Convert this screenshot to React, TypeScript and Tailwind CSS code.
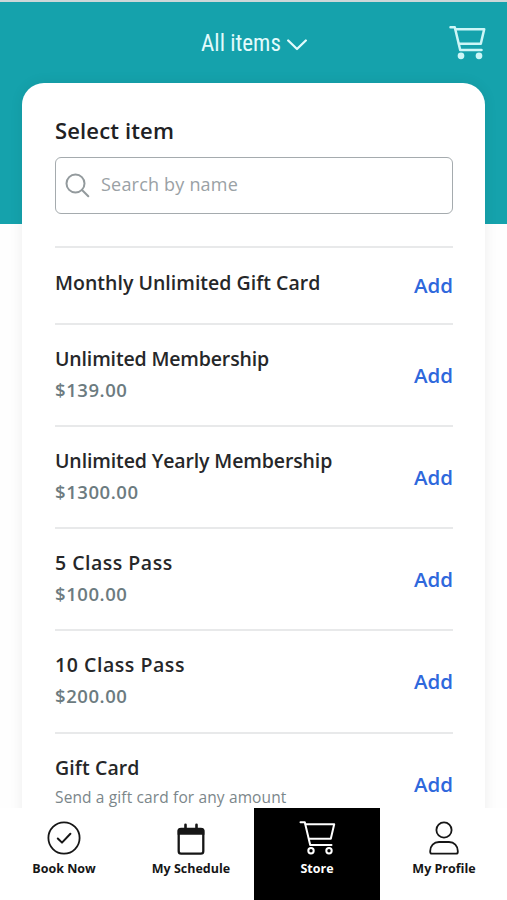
import type { ReactNode } from "react";

interface StoreItem {
  name: string;
  tracking: string;
  price?: string;
  description?: string;
}

interface TabProps {
  label: string;
  icon: ReactNode;
  active?: boolean;
}

const items: StoreItem[] = [
  { name: "Monthly Unlimited Gift Card", tracking: "tracking-[0.02px]" },
  { name: "Unlimited Membership", tracking: "tracking-[-0.15px]", price: "$139.00" },
  { name: "Unlimited Yearly Membership", tracking: "tracking-[-0.12px]", price: "$1300.00" },
  { name: "5 Class Pass", tracking: "tracking-[0.5px]", price: "$100.00" },
  { name: "10 Class Pass", tracking: "tracking-[0.55px]", price: "$200.00" },
  {
    name: "Gift Card",
    tracking: "tracking-[0.1px]",
    description: "Send a gift card for any amount",
  },
];

function CartIcon({ filled = false }: { filled?: boolean }) {
  return (
    <svg
      width="37"
      height="36"
      viewBox="0 0 37 36"
      fill="none"
      stroke="currentColor"
      strokeWidth={filled ? 2.5 : 2}
      strokeLinecap="round"
      strokeLinejoin="round"
    >
      <path d="M1.5 2.2H5.8L11.2 25H32.5" />
      <path d="M6.7 4.2H35.2L31.8 18.8H10" />
      <circle cx="12" cy="30.8" r={filled ? 2.1 : 2.7} fill={filled ? "currentColor" : "none"} />
      <circle cx="30" cy="30.8" r={filled ? 2.1 : 2.7} fill={filled ? "currentColor" : "none"} />
    </svg>
  );
}

function CheckCircleIcon() {
  return (
    <svg
      width="34"
      height="34"
      viewBox="0 0 34 34"
      fill="none"
      stroke="currentColor"
      strokeWidth="1.8"
      strokeLinecap="round"
      strokeLinejoin="round"
    >
      <circle cx="17" cy="17" r="15.6" />
      <path d="M10.8 17.5L15 21.6L23.4 12.8" strokeWidth="2" />
    </svg>
  );
}

function CalendarIcon() {
  return (
    <svg className="mt-0.5" width="28" height="32" viewBox="0 0 28 32" fill="none">
      <rect x="1.7" y="6" width="24.6" height="24.6" rx="2.4" stroke="currentColor" strokeWidth="2.3" />
      <path d="M.6 11.8V7.5Q.6 4.9 3.5 4.9H24.5Q27.4 4.9 27.4 7.500V11.800Z" fill="currentColor" />
      <path d="M8.5 1.7V6M19.5 1.7V6" stroke="currentColor" strokeWidth="2.6" strokeLinecap="round" />
    </svg>
  );
}

function ProfileIcon() {
  return (
    <svg
      width="30"
      height="34"
      viewBox="0 0 30 34"
      fill="none"
      stroke="currentColor"
      strokeWidth="1.8"
      strokeLinejoin="round"
    >
      <circle cx="15" cy="9" r="7.6" />
      <path d="M1.2 31V30C1.2 24.8 4.8 21 10 21H20C25.2 21 28.8 24.8 28.8 30V31Q28.8 32.7 27.1 32.7H2.9Q1.2 32.7 1.2 31Z" />
    </svg>
  );
}

function Tab({ label, icon, active = false }: TabProps) {
  return (
    <button
      className={`flex flex-1 flex-col items-center pt-3 ${
        active ? "bg-black text-white" : "bg-white pl-px text-[#161616]"
      }`}
    >
      <span className="flex h-[36px] items-center justify-center">{icon}</span>
      <span className="mt-[3px] text-[12.5px] leading-5 font-bold whitespace-nowrap">{label}</span>
    </button>
  );
}

function ItemRow({ item }: { item: StoreItem }) {
  const single = !item.price && !item.description;

  return (
    <li
      className={`flex justify-between border-t-2 border-[#e8e9ea] ${
        single ? "h-[76.5px] pt-[21px]" : "h-[102.3px] pt-5"
      }`}
    >
      <div>
        <div className={`text-[19.5px] leading-7 font-semibold text-[#262729] ${item.tracking}`}>
          {item.name}
        </div>
        {item.price && (
          <div className="mt-[3px] text-[18.5px] leading-7 font-semibold tracking-[0.55px] text-[#6c7b80]">
            {item.price}
          </div>
        )}
        {item.description && (
          <div className="mt-[7px] text-[15.5px] leading-[17px] font-medium tracking-[0.13px] text-[#7b868a]">
            {item.description}
          </div>
        )}
      </div>
      <button
        className={`h-7 text-[20.5px] leading-7 font-semibold text-[#2f68dc] ${
          single ? "mt-[1.5px]" : "mt-4"
        }`}
      >
        Add
      </button>
    </li>
  );
}

export default function App() {
  return (
    <div className="flex h-[900px] w-full flex-col overflow-hidden bg-[#fefefe] font-['Open_Sans','Noto_Sans',sans-serif]">
      <main className="min-h-0 flex-1 overflow-hidden">
        <header className="h-[224px] border-t-2 border-[#ccd7d8] bg-[#15a2ac]">
          <div className="grid h-[81px] grid-cols-3 items-center px-[21px]">
            <span />
            <button className="mt-1 ml-px flex items-center justify-center gap-1.5 font-[Roboto,sans-serif] text-[23px] text-[#e3fbfc]">
              <span className="whitespace-nowrap [font-stretch:75%]">All items</span>
              <svg
                width="20"
                height="12"
                viewBox="0 0 20 12"
                fill="none"
                stroke="currentColor"
                strokeWidth="2.3"
                strokeLinecap="round"
                strokeLinejoin="round"
              >
                <path d="M1.2 1.5L10 10L18.8 1.5" />
              </svg>
            </button>
            <button className="justify-self-end text-[#cdf6f7]">
              <CartIcon filled />
            </button>
          </div>
        </header>

        <section className="relative mx-[22px] -mt-[141px] h-[900px] rounded-t-[22px] bg-white pt-8 pr-8 pl-[33px] shadow-[0_0_14px_rgba(0,0,0,0.07)]">
          <h1 className="text-[22px] leading-[30px] font-semibold tracking-[0.15px] text-[#202124]">
            Select item
          </h1>
          <label className="mt-3 flex h-[57px] items-center gap-[11px] rounded-md border-[1.5px] border-[#a5abae] px-[9px]">
            <svg
              width="25"
              height="25"
              viewBox="0 0 25 25"
              fill="none"
              stroke="#939a9d"
              strokeWidth="2"
              strokeLinecap="round"
            >
              <circle cx="10.5" cy="10.5" r="9" />
              <path d="M17 17L23.3 23.3" />
            </svg>
            <input
              className="-mt-0.5 min-w-0 flex-1 text-[18px] font-medium tracking-[0.2px] outline-none placeholder:text-[#9aa1a5]"
              placeholder="Search by name"
            />
          </label>
          <ul className="mt-8">
            {items.map((item) => (
              <ItemRow key={item.name} item={item} />
            ))}
          </ul>
        </section>
      </main>

      <nav className="flex h-[92px] shrink-0 bg-white">
        <Tab label="Book Now" icon={<CheckCircleIcon />} />
        <Tab label="My Schedule" icon={<CalendarIcon />} />
        <Tab label="Store" icon={<CartIcon />} active />
        <Tab label="My Profile" icon={<ProfileIcon />} />
      </nav>
    </div>
  );
}
